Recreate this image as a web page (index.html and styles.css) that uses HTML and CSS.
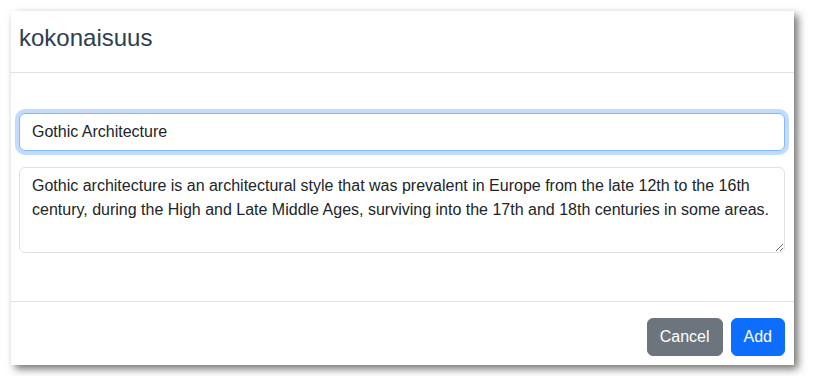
FILE: index.html
```html
<!DOCTYPE html>
<html>
<head>
    <title>kokonaisuus</title>
    <link rel="stylesheet" href="styles.css">
</head>
<body>
    <div class="modal">
        <div class="modal-header">
            <h5 class="modal-title">kokonaisuus</h5>
        </div>
        <div class="modal-body">
            <div class="form-group">
                <input type="text" class="form-control is-focused" value="Gothic Architecture">
            </div>
            <div class="form-group">
                <textarea class="form-control" rows="3">Gothic architecture is an architectural style that was prevalent in Europe from the late 12th to the 16th century, during the High and Late Middle Ages, surviving into the 17th and 18th centuries in some areas.</textarea>
            </div>
        </div>
        <div class="modal-footer">
            <button class="btn btn-secondary">Cancel</button>
            <button class="btn btn-primary">Add</button>
        </div>
    </div>
</body>
</html>
```
FILE: styles.css
```css
body {
    margin: 0;
    padding: 11px;
    background-color: #fff;
    font-family: "Liberation Sans", Arial, sans-serif;
    color: #212529;
}

.modal {
    width: 783px;
    box-sizing: border-box;
    background-color: #fff;
    box-shadow: 4px 4px 8px rgba(0, 0, 0, 0.55);
}

.modal-header {
    padding: 12px 8px 20px;
    border-bottom: 1px solid #dee2e6;
}

.modal-title {
    margin: 0;
    font-size: 24px;
    font-weight: 400;
    line-height: 29px;
    color: #2c3e50;
}

.modal-body {
    padding: 40px 9px 32px 8px;
}

.form-group {
    margin-bottom: 16px;
}

.form-control {
    display: block;
    width: 100%;
    box-sizing: border-box;
    padding: 6px 12px;
    font-family: inherit;
    font-size: 16px;
    line-height: 24px;
    color: #212529;
    background-color: #fff;
    border: 1px solid #dee2e6;
    border-radius: 6px;
    outline: none;
}

textarea.form-control {
    resize: vertical;
}

.form-control.is-focused {
    border-color: #86b7fe;
    box-shadow: 0 0 0 4px rgba(13, 110, 253, 0.25);
}

.modal-footer {
    display: flex;
    justify-content: flex-end;
    gap: 8px;
    padding: 16px 9px 9px 8px;
    border-top: 1px solid #dee2e6;
}

.btn {
    font-family: inherit;
    font-size: 16px;
    line-height: 24px;
    padding: 6px 12px;
    border: 1px solid transparent;
    border-radius: 6px;
    color: #fff;
}

.btn-secondary {
    background-color: #6c757d;
    border-color: #6c757d;
}

.btn-primary {
    background-color: #0d6efd;
    border-color: #0d6efd;
}
```
